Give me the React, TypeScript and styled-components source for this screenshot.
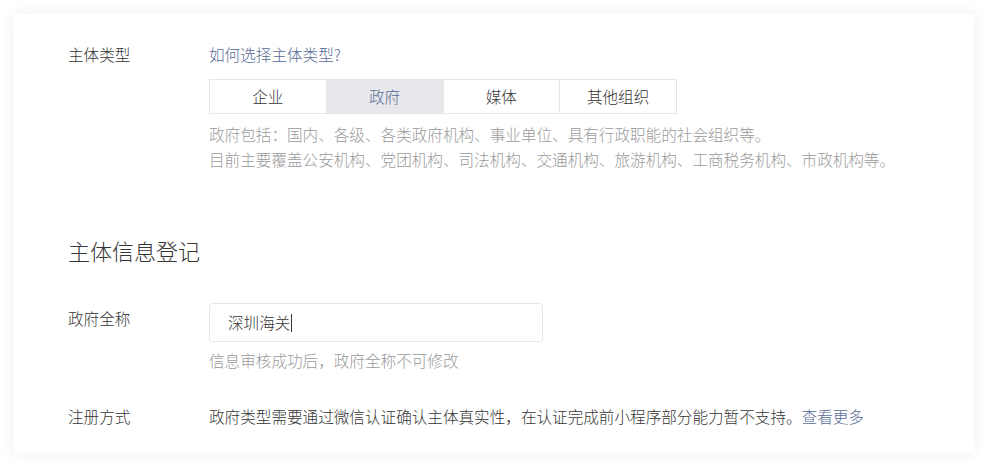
import { useState } from "react";
import styled, { createGlobalStyle } from "styled-components";

const GlobalStyle = createGlobalStyle`
  html, body {
    margin: 0;
    padding: 0;
    background: #ffffff;
  }
  body {
    font-family: "Noto Sans CJK SC", "Noto Sans", sans-serif;
    font-weight: 300;
    color: #353535;
  }
`;

const Page = styled.div`
  padding: 14px;
  height: 467px;
  box-sizing: border-box;
`;

const Card = styled.div`
  background: #fff;
  height: 439px;
  box-sizing: border-box;
  padding: 28px 54px 0;
  box-shadow: 0 0 16px rgba(0, 0, 0, 0.07);
  font-size: 15.6px;
  line-height: 25px;
`;

const FormRow = styled.div<{ $top?: number }>`
  display: grid;
  grid-template-columns: 141px 1fr;
  margin-top: ${({ $top }) => $top ?? 0}px;
`;

const Label = styled.div<{ $offset?: number }>`
  color: #353535;
  padding-top: ${({ $offset }) => $offset ?? 0}px;
`;

const Field = styled.div``;

const Link = styled.a`
  color: #576b95;
  text-decoration: none;
  cursor: pointer;
`;

const Tabs = styled.div`
  display: flex;
  width: 468px;
  margin: 12px 0 8px;
  border: 1px solid #e7e7eb;
  box-sizing: border-box;
`;

const Tab = styled.button<{ $active: boolean }>`
  flex: 1;
  height: 33px;
  border: none;
  border-left: 1px solid #e7e7eb;
  background: ${({ $active }) => ($active ? "#e7e7ec" : "#fff")};
  color: ${({ $active }) => ($active ? "#576b95" : "#353535")};
  font: inherit;
  padding: 0;
  cursor: pointer;

  &:first-child {
    border-left: none;
  }
`;

const Desc = styled.p`
  margin: 0;
  color: #9a9a9a;
`;

const Heading = styled.h2`
  margin: 63px 0 0;
  font-size: 22px;
  font-weight: 300;
  line-height: 30px;
  color: #353535;
`;

const Input = styled.div`
  width: 334px;
  height: 39px;
  box-sizing: border-box;
  border: 1px solid #e7e7eb;
  border-radius: 3px;
  padding: 0 18px;
  display: flex;
  align-items: center;
  color: #353535;
`;

const Caret = styled.span`
  display: inline-block;
  width: 1px;
  height: 18px;
  background: #353535;
  margin-left: 1px;
`;

const Hint = styled.p`
  margin: 6px 0 0;
  color: #9a9a9a;
`;

const tabs = ["企业", "政府", "媒体", "其他组织"];

const App = () => {
  const [active, setActive] = useState(1);

  return (
    <Page>
      <GlobalStyle />
      <Card>
        <FormRow>
          <Label>主体类型</Label>
          <Field>
            <Link>如何选择主体类型?</Link>
            <Tabs>
              {tabs.map((tab, index) => (
                <Tab
                  key={tab}
                  $active={index === active}
                  onClick={() => setActive(index)}
                >
                  {tab}
                </Tab>
              ))}
            </Tabs>
            <Desc>政府包括：国内、各级、各类政府机构、事业单位、具有行政职能的社会组织等。</Desc>
            <Desc>目前主要覆盖公安机构、党团机构、司法机构、交通机构、旅游机构、工商税务机构、市政机构等。</Desc>
          </Field>
        </FormRow>

        <Heading>主体信息登记</Heading>

        <FormRow $top={38}>
          <Label $offset={3}>政府全称</Label>
          <Field>
            <Input>
              深圳海关
              <Caret />
            </Input>
            <Hint>信息审核成功后，政府全称不可修改</Hint>
          </Field>
        </FormRow>

        <FormRow $top={31}>
          <Label>注册方式</Label>
          <Field>
            政府类型需要通过微信认证确认主体真实性，在认证完成前小程序部分能力暂不支持。
            <Link>查看更多</Link>
          </Field>
        </FormRow>
      </Card>
    </Page>
  );
};

export default App;
